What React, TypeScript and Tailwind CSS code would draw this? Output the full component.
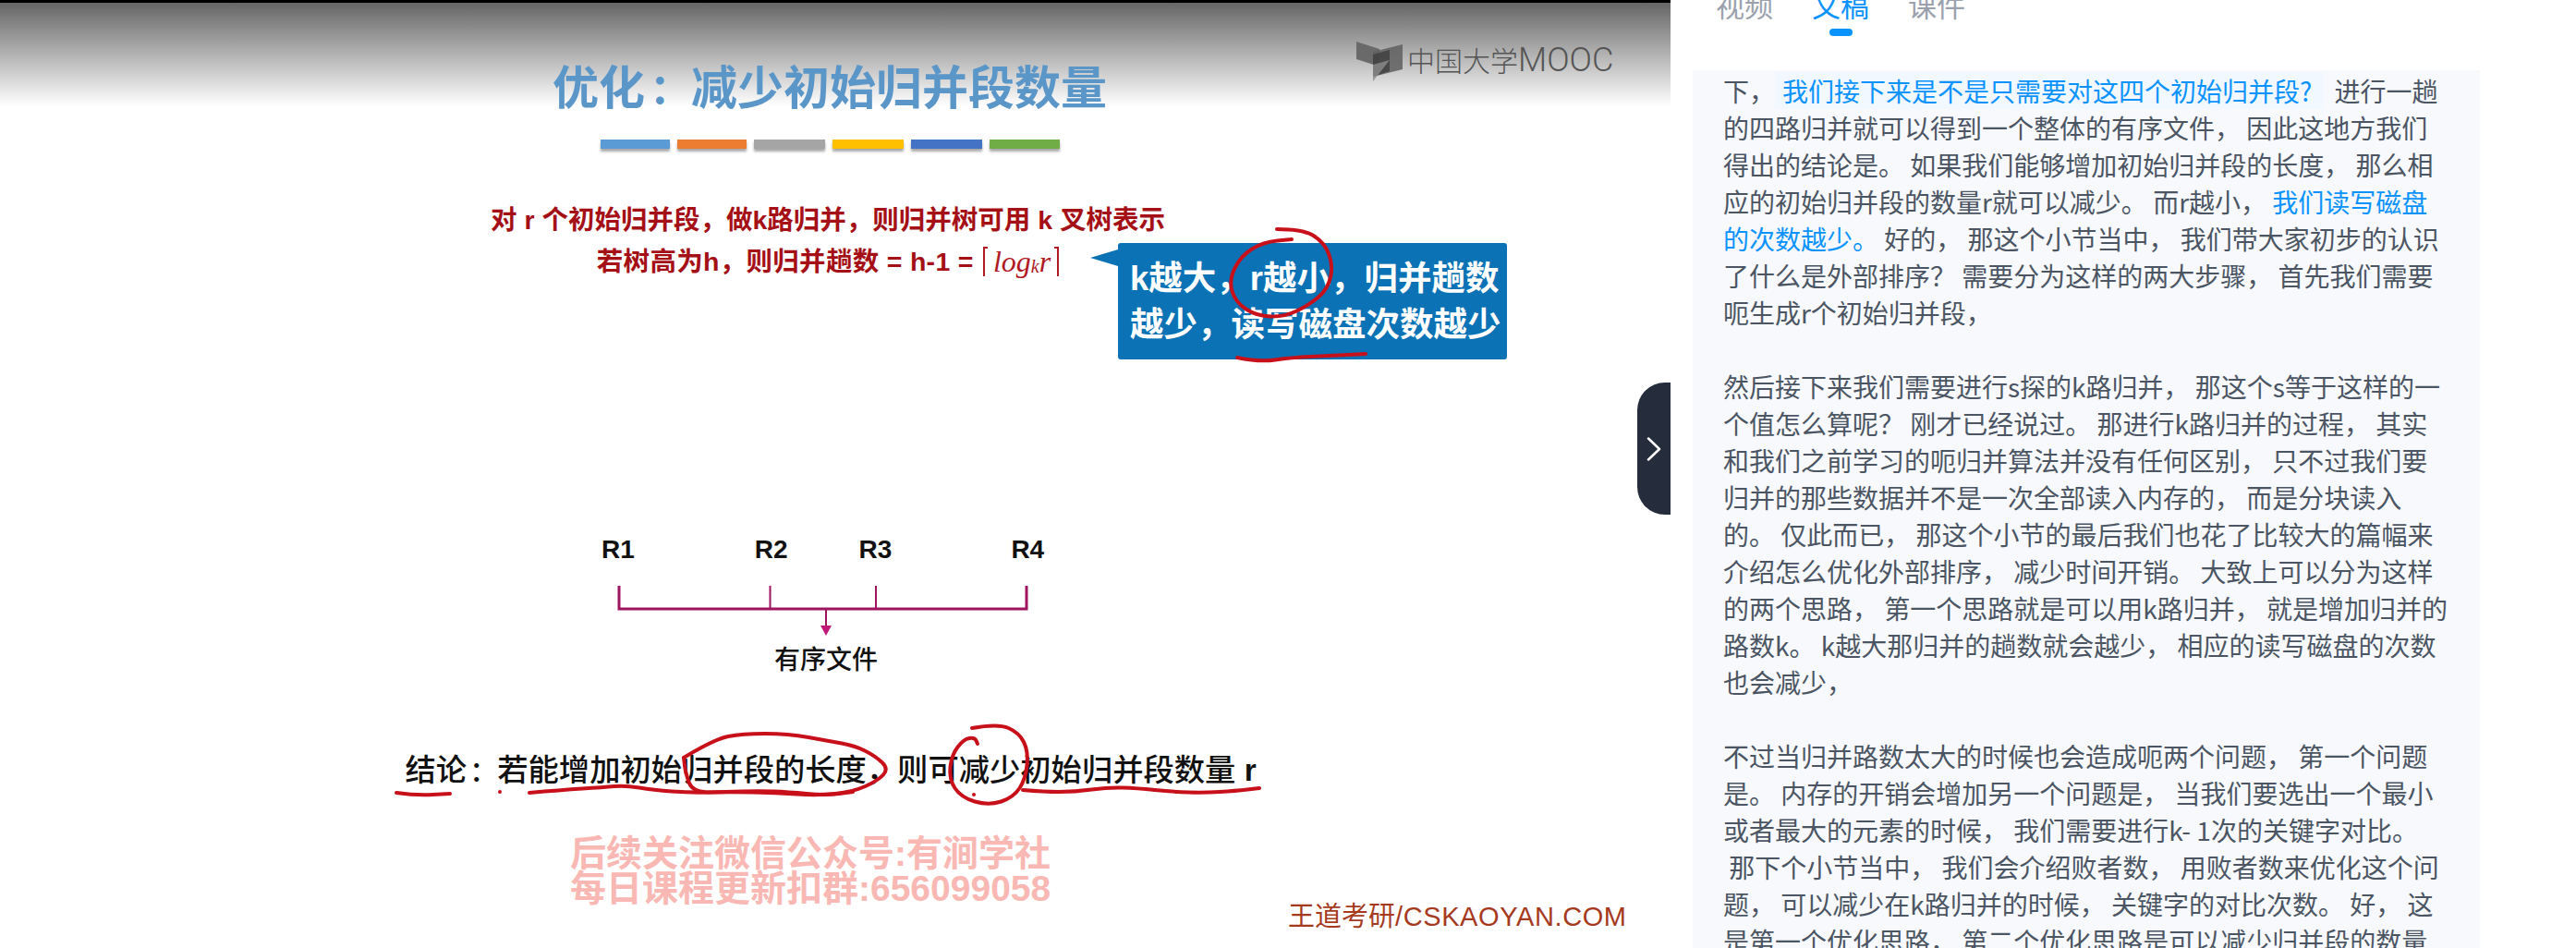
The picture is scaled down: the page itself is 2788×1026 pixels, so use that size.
const sans = "font-['Liberation_Sans','Noto_Sans_CJK_SC',sans-serif]";

// hand-drawn pen strokes on the slide, smoothed through the sampled points
function smooth(pts: number[][]) {
  let d = `M${pts[0][0]} ${pts[0][1]}`;
  for (let i = 1; i < pts.length - 1; i++) {
    const mx = (pts[i][0] + pts[i + 1][0]) / 2;
    const my = (pts[i][1] + pts[i + 1][1]) / 2;
    d += ` Q${pts[i][0]} ${pts[i][1]} ${mx} ${my}`;
  }
  const last = pts[pts.length - 1];
  return d + ` L${last[0]} ${last[1]}`;
}

const strokes = [
  [[1382, 248], [1410, 248], [1433, 262], [1443, 287], [1437, 313], [1417, 330], [1390, 343], [1360, 342], [1337, 327], [1330, 303], [1343, 277], [1367, 262], [1398, 259]],
  [[1339, 387], [1363, 392], [1397, 387], [1440, 385], [1478, 383]],
  [[429, 858], [450, 861], [487, 859]],
  [[573, 858], [607, 855], [653, 852], [677, 850], [707, 855], [747, 858], [787, 857], [820, 856], [853, 857], [893, 861], [923, 857]],
  [[740, 820], [773, 800], [803, 794], [853, 794], [897, 802], [925, 807], [947, 818], [962, 832], [950, 845], [923, 857], [885, 861], [840, 858], [790, 857], [750, 858], [742, 837], [740, 820]],
  [[1052, 788], [1080, 783], [1103, 793], [1113, 813], [1110, 843], [1097, 863], [1070, 872], [1040, 863], [1027, 843], [1030, 817], [1043, 800], [1055, 798], [1058, 805]],
  [[1107, 855], [1130, 857], [1163, 857], [1200, 852], [1230, 853], [1270, 857], [1303, 858], [1337, 856], [1363, 853]],
];

const bars = [
  "w-[75px] bg-[#5b9bd5]",
  "w-[75px] bg-[#ed7d31]",
  "w-[77px] bg-[#a5a5a5]",
  "w-[77px] bg-[#ffc000]",
  "w-[77px] bg-[#4472c4]",
  "w-[76px] bg-[#70ad47]",
];

type Part = string | { hl: string; box?: boolean };

const transcript: Part[][] = [
  ["下，", { hl: "我们接下来是不是只需要对这四个初始归并段?", box: true }, " 进行一趟"],
  ["的四路归并就可以得到一个整体的有序文件， 因此这地方我们"],
  ["得出的结论是。 如果我们能够增加初始归并段的长度， 那么相"],
  ["应的初始归并段的数量r就可以减少。 而r越小， ", { hl: "我们读写磁盘" }],
  [{ hl: "的次数越少。" }, " 好的， 那这个小节当中， 我们带大家初步的认识"],
  ["了什么是外部排序？ 需要分为这样的两大步骤， 首先我们需要"],
  ["呃生成r个初始归并段，"],
  [" "],
  ["然后接下来我们需要进行s探的k路归并， 那这个s等于这样的一"],
  ["个值怎么算呢？ 刚才已经说过。 那进行k路归并的过程， 其实"],
  ["和我们之前学习的呃归并算法并没有任何区别， 只不过我们要"],
  ["归并的那些数据并不是一次全部读入内存的， 而是分块读入"],
  ["的。 仅此而已， 那这个小节的最后我们也花了比较大的篇幅来"],
  ["介绍怎么优化外部排序， 减少时间开销。 大致上可以分为这样"],
  ["的两个思路， 第一个思路就是可以用k路归并， 就是增加归并的"],
  ["路数k。 k越大那归并的趟数就会越少， 相应的读写磁盘的次数"],
  ["也会减少，"],
  [" "],
  ["不过当归并路数太大的时候也会造成呃两个问题， 第一个问题"],
  ["是。 内存的开销会增加另一个问题是， 当我们要选出一个最小"],
  ["或者最大的元素的时候， 我们需要进行k- 1次的关键字对比。"],
  [" 那下个小节当中， 我们会介绍败者数， 用败者数来优化这个问"],
  ["题， 可以减少在k路归并的时候， 关键字的对比次数。 好， 这"],
  ["是第一个优化思路， 第二个优化思路是可以减少归并段的数量"],
];

function Slide() {
  return (
    <div className={`relative h-full w-[1808px] shrink-0 overflow-hidden bg-[linear-gradient(#000_0,#000_3px,#666_3px,#fff_115px)] pt-[71px] ${sans}`}>
      <h1 className="w-[1796px] text-center text-[50px] leading-[50px] font-bold text-[#5b96c8]">
        优化<span className="ml-[5px] text-[45px]">：</span>减少初始归并段数量
      </h1>

      <div className="mt-[28px] ml-[650px] flex gap-[8px]">
        {bars.map((b) => (
          <div key={b} className={`h-[10px] shadow-[0_3px_3px_rgba(0,0,0,0.35)] ${b}`} />
        ))}
      </div>

      <div className="mt-[57px] w-[1792px] text-center text-[28.5px] font-bold text-[#a50f16]">
        <p className="leading-[40px]">对 r 个初始归并段，做k路归并，则归并树可用 k 叉树表示</p>
        <p className="flex h-[50px] items-center justify-center leading-[50px]">
          <span className="tracking-[0.3px] whitespace-pre">若树高为h，则归并趟数 = h-1 = </span>
          <span className="ml-[2px] flex h-[32px] items-center font-['Liberation_Serif',serif] text-[32px] font-normal italic text-[#b01a22]">
            <span className="mr-[6px] h-[32px] w-[5px] border-t-2 border-l-2 border-[#b01a22]" />
            log
            <sub className="text-[20px]">k</sub>
            r
            <span className="ml-[4px] h-[32px] w-[5px] border-t-2 border-r-2 border-[#b01a22]" />
          </span>
        </p>
      </div>

      <div className="mt-[272px] flex text-[28px] leading-[30px] font-bold text-[#111]">
        <span className="ml-[651px]">R1</span>
        <span className="ml-[130px]">R2</span>
        <span className="ml-[77px]">R3</span>
        <span className="ml-[129px]">R4</span>
      </div>
      <svg className="mt-[24px] ml-[660px] block" width="460" height="54" viewBox="0 0 460 54" fill="none">
        <path d="M10 0V25H451V0" stroke="#a0145f" strokeWidth="3" />
        <path d="M173.5 0V25M288 0V25" stroke="#a0145f" strokeWidth="2" />
        <path d="M234 25V46" stroke="#a0145f" strokeWidth="2" />
        <path d="M228 43H240L234 54Z" fill="#c2187a" />
      </svg>
      <p className="mt-[9px] ml-[838px] text-[28px] leading-[36px] font-medium text-[#111]">有序文件</p>

      <p className="mt-[81px] w-[1798px] text-center text-[33.3px] leading-[40px] font-medium text-[#111]">
        结论<span className="ml-[3.3px] text-[30px]">：</span>若能增加初始归并段的长度，则可减少初始归并段数量 <span className="font-bold">r</span>
      </p>

      <div className="mt-[50px] ml-[617px] text-[39px] leading-[38px] font-bold whitespace-nowrap text-[#f9b8b3]">
        <p>后续关注微信公众号:有涧学社</p>
        <p>每日课程更新扣群:656099058</p>
      </div>

      {/* watermark logo */}
      <div className="absolute top-[45px] left-[1468px] flex items-start">
        <svg width="50" height="43" viewBox="0 0 50 43">
          <path d="M0 0L25 8V27L0 19Z" fill="#6a6a6a" />
          <path d="M18 11L50 3V30L18 38Z" fill="#5f5f5f" opacity="0.85" />
          <path d="M18 14L36 9V32L18 38Z" fill="#3f3f3f" opacity="0.8" />
          <path d="M18 25L36 20L18 43Z" fill="#8c8c8c" opacity="0.8" />
        </svg>
        <span className="mt-[2px] ml-[5px] text-[30px] leading-[36px] font-light whitespace-nowrap text-[#555]">
          中国大学<span className="font-['Roboto',sans-serif] text-[36px] font-light">MOOC</span>
        </span>
      </div>

      <div className="absolute top-[263px] left-[1210px] h-[126px] w-[421px] rounded-[3px] bg-[#0b72b5] pt-[14px] pl-[13px] text-[36.5px] leading-[50px] font-bold whitespace-nowrap text-white">
        <span className="absolute top-[7px] -left-[30px] h-0 w-0 border-y-[9px] border-r-[30px] border-y-transparent border-r-[#0b72b5]" />
        <p>k越大，r越小，归并趟数</p>
        <p>越少，读写磁盘次数越少</p>
      </div>

      <p className="absolute top-[975px] left-[1394px] text-[29px] leading-[34px] whitespace-nowrap text-[#a63a1e]">
        王道考研<span className="tracking-[0.6px]">/CSKAOYAN.COM</span>
      </p>

      <svg className="pointer-events-none absolute inset-0" width="1808" height="1026" viewBox="0 0 1808 1026" fill="none">
        {strokes.map((s, i) => (
          <path key={i} d={smooth(s)} stroke="#c8101a" strokeWidth="4" strokeLinecap="round" strokeLinejoin="round" />
        ))}
        <circle cx="541" cy="857" r="2" fill="#c8101a" />
        <circle cx="1054" cy="860" r="2" fill="#c8101a" />
      </svg>

      {/* collapse handle */}
      <button className="absolute top-[414px] right-0 flex h-[143px] w-[36px] items-center justify-center rounded-l-[30px] bg-[#252c3b]">
        <svg width="16" height="26" viewBox="0 0 16 26" fill="none">
          <path d="M2 1.5L14 13L2 24.5" stroke="#fff" strokeWidth="2.5" strokeLinecap="round" strokeLinejoin="round" />
        </svg>
      </button>
    </div>
  );
}

function Transcript() {
  return (
    <div className="min-w-0 flex-1 overflow-hidden bg-white pl-[24px] font-['Noto_Sans_CJK_SC',sans-serif]">
      <div className="-mt-[15px] ml-[25px] flex gap-[42px] text-[31px] leading-[40px] text-[#9aa1ad]">
        <span>视频</span>
        <div className="flex flex-col items-center text-[#0a93ff]">
          <span>文稿</span>
          <span className="mt-[6px] h-[8px] w-[25px] rounded-[4px] bg-[#0a93ff]" />
        </div>
        <span>课件</span>
      </div>
      <div className="mt-[37px] h-[950px] w-[852px] overflow-hidden bg-[#f7f9fd] pt-[2px] pl-[33px] text-[28px] leading-[40px] text-[#4b5563]">
        {transcript.map((parts, i) => (
          <p key={i} className="h-[40px] whitespace-pre">
            {parts.map((part, j) =>
              typeof part === "string" ? (
                <span key={j}>{part}</span>
              ) : (
                <span key={j} className={part.box ? "mr-[5px] bg-[#f1f8ff] pr-[13px] pl-[8px] text-[#0a93ff]" : "text-[#0a93ff]"}>
                  {part.hl}
                </span>
              ),
            )}
          </p>
        ))}
      </div>
    </div>
  );
}

export default function App() {
  return (
    <div className="flex h-[1026px] w-[2788px] overflow-hidden bg-white">
      <Slide />
      <Transcript />
    </div>
  );
}
